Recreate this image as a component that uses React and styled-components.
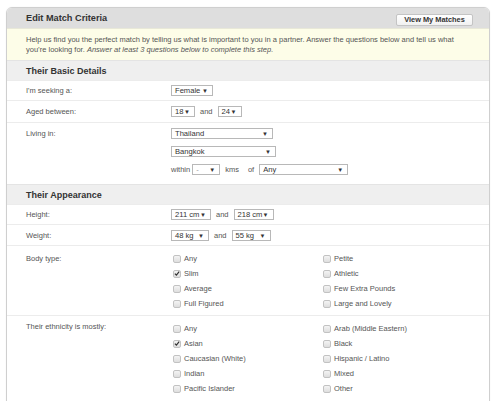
import styled, { createGlobalStyle } from 'styled-components';

const GlobalStyle = createGlobalStyle`
  html, body {
    margin: 0;
    padding: 0;
    background: #fff;
    overflow: hidden;
  }
  body {
    font-family: "Liberation Sans", Arial, sans-serif;
    color: #444;
  }
`;

const Panel = styled.div`
  margin: 7px 10px 0 6px;
  border: 1px solid #cfcfcf;
  border-radius: 6px 6px 0 0;
  overflow: hidden;
  box-shadow: 0 0 2px rgba(0, 0, 0, 0.06);
`;

const Header = styled.div`
  height: 20px;
  background: #dedede;
  display: flex;
  align-items: center;
  justify-content: space-between;
  padding: 0 16px 0 19px;
`;

const Title = styled.h1`
  margin: 0;
  font-size: 9.2px;
  font-weight: bold;
  color: #333;
`;

const Button = styled.button`
  height: 12px;
  width: 77px;
  margin-top: 3px;
  padding: 0;
  border: 1px solid #c4c4c4;
  border-radius: 2px;
  background: linear-gradient(#ffffff, #f1f1f1);
  font-family: inherit;
  font-size: 7.4px;
  font-weight: bold;
  color: #333;
`;

const Notice = styled.div`
  background: #fdfde8;
  border-top: 1px solid #e8e8d8;
  padding: 6px 19px 6px;
  font-size: 7.5px;
  line-height: 9.5px;
  color: #555;
  height: 19px;
`;

const SectionHeader = styled.h2`
  margin: 0;
  height: 19px;
  display: flex;
  align-items: center;
  padding: 0 19px;
  background: #efefef;
  border-top: 1px solid #e4e4e4;
  font-size: 9px;
  font-weight: bold;
  color: #333;
`;

const Row = styled.div`
  display: grid;
  grid-template-columns: 145px 1fr;
  padding: ${(p) => p.$pad || '5px 0'};
  padding-left: 19px;
  border-top: 1px solid #ececec;
  font-size: 7.5px;
  color: #555;
`;

const Label = styled.div`
  line-height: ${(p) => p.$lh || '11px'};
`;

const Controls = styled.div`
  display: flex;
  flex-direction: column;
  gap: ${(p) => p.$gap || '0'};
`;

const Line = styled.div`
  display: flex;
  align-items: center;
  height: 11px;
  gap: 5px;
`;

const Word = styled.span`
  margin-left: ${(p) => p.$ml || '0'};
`;

const SelectBox = styled.div`
  box-sizing: border-box;
  height: 11px;
  width: ${(p) => p.$w}px;
  border: 1px solid #b8b8b8;
  background: #fff;
  display: flex;
  align-items: center;
  justify-content: space-between;
  padding: 0 4px 0 3px;
  font-size: 7.6px;
  color: ${(p) => (p.$muted ? '#999' : '#333')};
`;

const Arrow = styled.span`
  font-size: 6px;
  color: #333;
`;

const CheckGrid = styled.div`
  display: grid;
  grid-auto-flow: column;
  grid-template-rows: repeat(${(p) => p.$rows}, 15px);
  grid-template-columns: 150px 150px;
  margin-left: 2px;
`;

const CheckItem = styled.label`
  display: flex;
  align-items: center;
  gap: 3px;
  color: #555;
`;

const Box = styled.span`
  box-sizing: border-box;
  width: 8px;
  height: 8px;
  border: 1px solid #c2c2c2;
  border-radius: 2px;
  background: linear-gradient(#f4f4f4, #dedede);
  display: flex;
  align-items: center;
  justify-content: center;
`;

function Select({ value, w, muted }) {
  return (
    <SelectBox $w={w} $muted={muted}>
      <span>{value}</span>
      <Arrow>▼</Arrow>
    </SelectBox>
  );
}

function Check({ label, checked }) {
  return (
    <CheckItem>
      <Box>
        {checked && (
          <svg width="7" height="7" viewBox="0 0 7 7">
            <path d="M1 3.6 L2.8 5.4 L6 1.2" fill="none" stroke="#333" strokeWidth="1.4" />
          </svg>
        )}
      </Box>
      {label}
    </CheckItem>
  );
}

const bodyTypes = [
  ['Any'], ['Slim', true], ['Average'], ['Full Figured'],
  ['Petite'], ['Athletic'], ['Few Extra Pounds'], ['Large and Lovely'],
];

const ethnicities = [
  ['Any'], ['Asian', true], ['Caucasian (White)'], ['Indian'], ['Pacific Islander'],
  ['Arab (Middle Eastern)'], ['Black'], ['Hispanic / Latino'], ['Mixed'], ['Other'],
];

export default function App() {
  return (
    <>
      <GlobalStyle />
      <Panel>
        <Header>
          <Title>Edit Match Criteria</Title>
          <Button>View My Matches</Button>
        </Header>
        <Notice>
          Help us find you the perfect match by telling us what is important to you in a partner. Answer the questions below and tell us what
          you’re looking for. <i>Answer at least 3 questions below to complete this step.</i>
        </Notice>

        <SectionHeader>Their Basic Details</SectionHeader>
        <Row $pad="4px 0 4px">
          <Label>I'm seeking a:</Label>
          <Line><Select value="Female" w={42} /></Line>
        </Row>
        <Row $pad="5px 0 5px">
          <Label>Aged between:</Label>
          <Line>
            <Select value="18" w={24} />
            <span>and</span>
            <Select value="24" w={24} />
          </Line>
        </Row>
        <Row $pad="5px 0 9px">
          <Label>Living in:</Label>
          <Controls $gap="7px">
            <Line><Select value="Thailand" w={102} /></Line>
            <Line><Select value="Bangkok" w={105} /></Line>
            <Line>
              <span>within</span>
              <Word $ml="-3px"><Select value="-" w={28} muted /></Word>
              <span>kms</span>
              <Word $ml="4px">of</Word>
              <Select value="Any" w={89} />
            </Line>
          </Controls>
        </Row>

        <SectionHeader>Their Appearance</SectionHeader>
        <Row $pad="4px 0 4px">
          <Label>Height:</Label>
          <Line>
            <Select value="211 cm" w={40} />
            <span>and</span>
            <Select value="218 cm" w={40} />
          </Line>
        </Row>
        <Row $pad="5px 0 4px">
          <Label>Weight:</Label>
          <Line>
            <Select value="48 kg" w={38} />
            <span>and</span>
            <Select value="55 kg" w={39} />
          </Line>
        </Row>
        <Row $pad="5px 0 4px">
          <Label $lh="15px">Body type:</Label>
          <CheckGrid $rows={4}>
            {bodyTypes.map(([l, c]) => <Check key={l} label={l} checked={c} />)}
          </CheckGrid>
        </Row>
        <Row $pad="5px 0 6px">
          <Label $lh="12px">Their ethnicity is mostly:</Label>
          <CheckGrid $rows={5}>
            {ethnicities.map(([l, c]) => <Check key={l} label={l} checked={c} />)}
          </CheckGrid>
        </Row>
      </Panel>
    </>
  );
}
